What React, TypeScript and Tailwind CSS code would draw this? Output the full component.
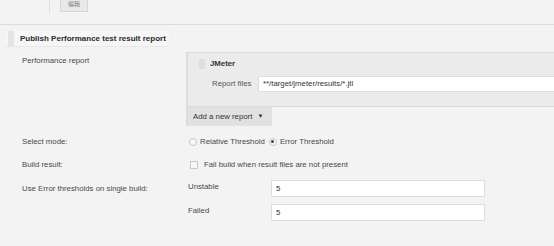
import React from "react";

const Handle = ({ h = 14 }: { h?: number }) => (
  <div
    className="w-[6px] shrink-0 bg-[radial-gradient(#cfcfcf_0.6px,transparent_0.8px)] bg-[length:2px_2px]"
    style={{ height: h }}
  />
);

const Radio = ({ checked }: { checked?: boolean }) => (
  <span className="inline-flex h-[8px] w-[8px] shrink-0 items-center justify-center rounded-full border border-[#c8c8c8] bg-[#f6f6f6]">
    {checked && <span className="h-[3px] w-[3px] rounded-full bg-[#444]" />}
  </span>
);

const App: React.FC = () => {
  return (
    <div className="h-[246px] w-[554px] overflow-hidden whitespace-nowrap bg-[#f3f3f3] font-['Liberation_Sans',Arial,sans-serif] text-[7.8px] text-[#484848]">
      {/* top strip */}
      <div className="flex h-[25px] border-b border-[#dcdcdc]">
        <div className="ml-[49px] h-[14px] w-px bg-[#e2e2e2]" />
        <div className="ml-[10px] flex h-[12px] w-[28px] items-end justify-center border-x border-b border-[#d6d6d6] bg-[#e9e9e9] pb-[4px] font-['Noto_Sans_CJK_SC',sans-serif] text-[6px] leading-none text-[#777]">
          编辑
        </div>
      </div>

      {/* section header */}
      <div className="mt-[6px] ml-[6px] flex h-[16px] w-fit items-center gap-[6px] border-b border-[#e8e8e8] bg-[#f6f6f6] pl-[2px] pr-[3px]">
        <Handle h={15} />
        <span className="text-[8px] font-bold text-[#2b2b2b]">
          Publish Performance test result report
        </span>
      </div>

      {/* performance report */}
      <div className="mt-[5px] flex">
        <div className="w-[186px] shrink-0 pl-[22px] pt-[3px]">Performance report</div>
        <div className="flex-1 border-l-2 border-[#dcdcdc]">
          <div className="h-[55px] w-[400px] border-t border-b border-[#dadada] bg-[#ebebeb]">
            <div className="mt-[5px] ml-[11px] flex items-center gap-[5px]">
              <Handle h={10} />
              <span className="font-bold text-[#333]">JMeter</span>
            </div>
            <div className="mt-[6px] flex items-center">
              <span className="ml-[24px] w-[46px] shrink-0 text-[#555]">Report files</span>
              <div className="flex h-[16px] flex-1 items-center border border-[#dedede] bg-white pl-[4px] text-[#333]">
                **/target/jmeter/results/*.jtl
              </div>
            </div>
          </div>
          <div className="flex h-[19px] w-[84px] items-center gap-[5px] bg-[#e1e1e1] pl-[5px] text-[#333]">
            Add a new report
            <span className="text-[6px]">▼</span>
          </div>
        </div>
      </div>

      {/* select mode */}
      <div className="mt-[10px] flex items-center">
        <div className="w-[189px] shrink-0 pl-[22px]">Select mode:</div>
        <Radio />
        <span className="ml-[3px]">Relative Threshold</span>
        <span className="ml-[4px] flex">
          <Radio checked />
        </span>
        <span className="ml-[3px]">Error Threshold</span>
      </div>

      {/* build result */}
      <div className="mt-[11px] flex items-center">
        <div className="w-[190px] shrink-0 pl-[22px]">Build result:</div>
        <span className="h-[8px] w-[8px] shrink-0 border border-[#c8c8c8] bg-[#f6f6f6]" />
        <span className="ml-[6px]">Fail build when result files are not present</span>
      </div>

      {/* thresholds */}
      <div className="mt-[10px] flex">
        <div className="w-[188px] shrink-0 pl-[22px] pt-[3px]">Use Error thresholds on single build:</div>
        <div className="flex flex-col gap-[7px]">
          <div className="flex">
            <span className="w-[83px] shrink-0 pt-[1px]">Unstable</span>
            <div className="flex h-[17px] w-[214px] items-center border border-[#dcdcdc] bg-white pl-[4px] text-[#333]">
              5
            </div>
          </div>
          <div className="flex">
            <span className="w-[83px] shrink-0 pt-[1px]">Failed</span>
            <div className="flex h-[17px] w-[214px] items-center border border-[#dcdcdc] bg-white pl-[4px] text-[#333]">
              5
            </div>
          </div>
        </div>
      </div>
    </div>
  );
};

export default App;
